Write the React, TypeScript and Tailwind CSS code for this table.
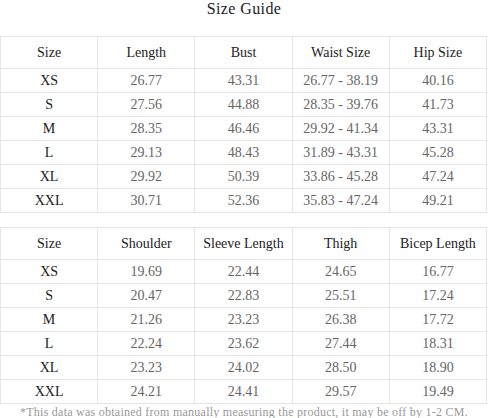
const table1 = {
  head: ['Size', 'Length', 'Bust', 'Waist Size', 'Hip Size'],
  rows: [
    ['XS', '26.77', '43.31', '26.77 - 38.19', '40.16'],
    ['S', '27.56', '44.88', '28.35 - 39.76', '41.73'],
    ['M', '28.35', '46.46', '29.92 - 41.34', '43.31'],
    ['L', '29.13', '48.43', '31.89 - 43.31', '45.28'],
    ['XL', '29.92', '50.39', '33.86 - 45.28', '47.24'],
    ['XXL', '30.71', '52.36', '35.83 - 47.24', '49.21'],
  ],
}

const table2 = {
  head: ['Size', 'Shoulder', 'Sleeve Length', 'Thigh', 'Bicep Length'],
  rows: [
    ['XS', '19.69', '22.44', '24.65', '16.77'],
    ['S', '20.47', '22.83', '25.51', '17.24'],
    ['M', '21.26', '23.23', '26.38', '17.72'],
    ['L', '22.24', '23.62', '27.44', '18.31'],
    ['XL', '23.23', '24.02', '28.50', '18.90'],
    ['XXL', '24.21', '24.41', '29.57', '19.49'],
  ],
}

function SizeTable({ data }: { data: { head: string[]; rows: string[][] } }) {
  return (
    <table className="w-[487px] table-fixed border-collapse">
      <thead>
        <tr className="h-[32px]">
          {data.head.map((h) => (
            <th key={h} className="border border-[#e6e6e6] text-center text-[14px] font-normal text-[#222]">
              {h}
            </th>
          ))}
        </tr>
      </thead>
      <tbody>
        {data.rows.map((row) => (
          <tr key={row[0]} className="h-[24px]">
            {row.map((cell, i) => (
              <td
                key={i}
                className={
                  'border border-[#e6e6e6] text-center text-[14px] leading-[16px] ' +
                  (i === 0 ? 'text-[#222]' : 'text-[#666]')
                }
              >
                {cell}
              </td>
            ))}
          </tr>
        ))}
      </tbody>
    </table>
  )
}

export default function App() {
  return (
    <div className="w-[488px] h-[418px] bg-white overflow-hidden" style={{ fontFamily: '"Liberation Serif", serif' }}>
      <div className="h-[36px] text-center text-[16px] leading-[18px] tracking-[0.4px] text-[#222]">Size Guide</div>
      <SizeTable data={table1} />
      <div className="h-[14px]" />
      <SizeTable data={table2} />
      <p className="mt-[1px] text-center text-[12px] leading-[14px] tracking-[0.25px] text-[#999]">
        *This data was obtained from manually measuring the product, it may be off by 1-2 CM.
      </p>
    </div>
  )
}
